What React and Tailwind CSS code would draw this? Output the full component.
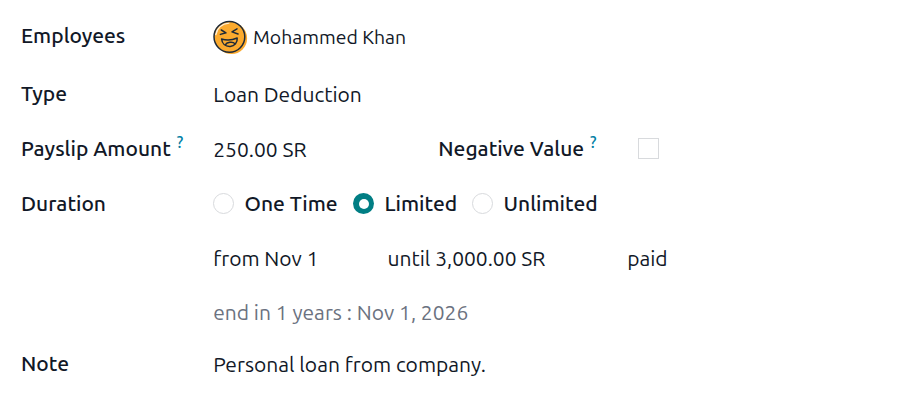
import React from "react";

function Row({ height, label, help, children }) {
  return (
    <div className={`flex items-start ${height}`}>
      <div className="flex w-48 shrink-0 font-medium">
        {label}
        {help && <Help />}
      </div>
      {children}
    </div>
  );
}

function Help() {
  return <sup className="top-0 ml-1.5 -mt-[6px] text-[15.75px] leading-[28px] font-medium text-[#0180a5]">?</sup>;
}

function Radio({ checked }) {
  if (checked) {
    return (
      <span className="mt-1 flex size-[21px] shrink-0 items-center justify-center rounded-full bg-[#017e84]">
        <span className="size-[10px] rounded-full bg-white" />
      </span>
    );
  }
  return <span className="mt-1 size-[21px] shrink-0 rounded-full border border-[#d8dadd] bg-white" />;
}

function Avatar() {
  return (
    <svg className="-mt-px h-[36px] w-[36px] shrink-0" viewBox="0 0 36 36" fill="none" strokeLinecap="round" strokeLinejoin="round">
      <circle cx="18.5" cy="18.4" r="15.6" fill="#fbaa2e" />
      <circle cx="16.4" cy="16.8" r="15.4" fill="#fbaa2e" />
      <path d="M2.8 14.5C4.2 8 9.2 3.8 15.8 3.1" stroke="#fff1dc" strokeWidth="1.4" />
      <circle cx="16.4" cy="16.8" r="15.4" stroke="#1f2a37" strokeWidth="1.5" />
      <g stroke="#1f2a37" strokeWidth="1.5">
        <path d="M8.3 10L13 12.8L7.4 14.4" />
        <path d="M24 8.8L19 11.9L25 14" />
        <path d="M8.6 19C13 20.3 19.5 20 24.2 18C24.6 22.6 21.6 26 17.2 26.4C12.3 26.7 9 23.6 8.6 19Z" />
        <path d="M12.6 24.8C13.4 22 20 21.2 21.8 23.6" />
      </g>
    </svg>
  );
}

export default function App() {
  return (
    <div className="h-[411px] w-[916px] overflow-hidden bg-white pt-[21px] pl-[21px] font-['Ubuntu','Noto_Sans',sans-serif] text-[21px] leading-[28px] whitespace-nowrap text-[#111827]">
      <Row height="h-[58px]" label={<span>Employees</span>}>
        <Avatar />
        <span className="ml-1 pt-0.5 text-[19.4px]">Mohammed Khan</span>
      </Row>
      <Row height="h-[55px]" label={<span>Type</span>}>
        <span className="pt-px pl-[0.2px]">Loan Deduction</span>
      </Row>
      <Row height="h-[55px]" label={<span>Payslip Amount</span>} help>
        <span className="w-[225px] pt-px pl-[0.2px]">250.00 SR</span>
        <div className="flex w-[200px] pl-[0.3px] font-medium">
          <span>Negative Value</span>
          <Help />
        </div>
        <span className="mt-1 size-[21px] border border-[#d8dadd]" />
      </Row>
      <Row height="h-[55px]" label={<span>Duration</span>}>
        <div className="flex font-medium">
          <div className="flex w-[140px] gap-[10.5px]"><Radio /><span>One Time</span></div>
          <div className="flex w-[119px] gap-[10.5px]"><Radio checked /><span>Limited</span></div>
          <div className="flex gap-[10.5px]"><Radio /><span>Unlimited</span></div>
        </div>
      </Row>
      <Row height="h-[54px]">
        <span className="w-[174px] pl-[0.2px]">from Nov 1</span>
        <span className="w-[240px] pl-[0.5px]">until 3,000.00 SR</span>
        <span className="pl-[0.2px]">paid</span>
      </Row>
      <Row height="h-[51px]">
        <span className="pl-[0.2px] text-[#6b7280]">end in 1 years : Nov 1, 2026</span>
      </Row>
      <Row height="h-[40px]" label={<span>Note</span>}>
        <span className="pt-px pl-[0.2px]">Personal loan from company.</span>
      </Row>
    </div>
  );
}
